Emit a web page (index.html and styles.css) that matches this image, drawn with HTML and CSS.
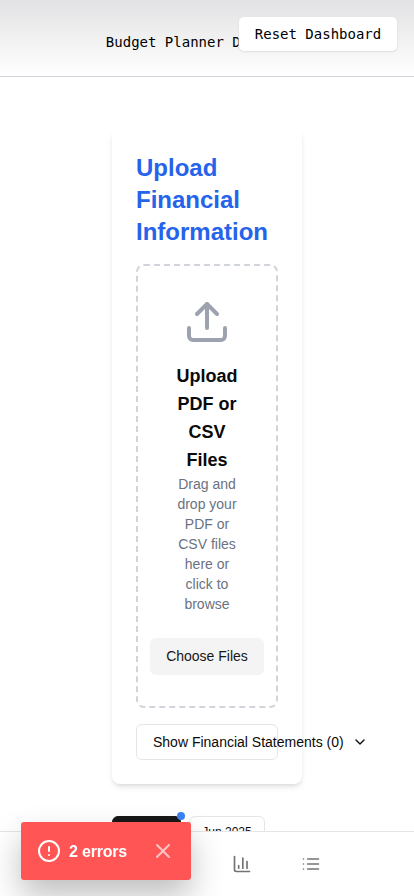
FILE: index.html
```html
<!DOCTYPE html>
<html lang="en">
<head>
<meta charset="utf-8">
<title>Budget Planner Dashboard</title>
<link rel="stylesheet" href="styles.css">
</head>
<body>
<header class="header">
  <p class="title">Budget Planner Dashboard</p>
  <button class="reset">Reset Dashboard</button>
</header>
<main class="main">
  <section class="card">
    <h2 class="heading">Upload Financial Information</h2>
    <div class="dropzone">
      <svg class="upload" viewBox="0 0 24 24"><path d="M21 15v4a2 2 0 0 1-2 2H5a2 2 0 0 1-2-2v-4"/><path d="m17 8-5-5-5 5"/><path d="M12 3v12"/></svg>
      <h3 class="drop-title">Upload PDF or CSV Files</h3>
      <p class="drop-text">Drag and drop your PDF or CSV files here or click to browse</p>
      <button class="choose">Choose Files</button>
    </div>
    <button class="statements"><span>Show Financial Statements (0)</span><svg viewBox="0 0 24 24"><path d="m6 9 6 6 6-6"/></svg></button>
  </section>
  <div class="months">
    <button class="month active">May 2025<i class="dot"></i></button>
    <button class="month">Jun 2025</button>
  </div>
</main>
<nav class="nav">
  <a><svg viewBox="0 0 24 24"><path d="m3 10 9-7 9 7v11H3z"/></svg></a>
  <a><svg viewBox="0 0 24 24"><circle cx="12" cy="12" r="9"/></svg></a>
  <a><svg viewBox="0 0 24 24"><path d="M3 3v16a2 2 0 0 0 2 2h16"/><path d="M18 17V9"/><path d="M13 17V5"/><path d="M8 17v-3"/></svg></a>
  <a><svg viewBox="0 0 24 24"><path d="M3 12h.01"/><path d="M3 18h.01"/><path d="M3 6h.01"/><path d="M8 12h13"/><path d="M8 18h13"/><path d="M8 6h13"/></svg></a>
</nav>
<div class="toast">
  <svg class="alert" viewBox="0 0 24 24"><circle cx="12" cy="12" r="10"/><path d="M12 8v4"/><path d="M12 16h.01"/></svg>
  <span class="count">2 errors</span>
  <svg class="close" viewBox="0 0 24 24"><path d="M18 6 6 18"/><path d="m6 6 12 12"/></svg>
</div>
</body>
</html>
```
FILE: styles.css
```css
* { box-sizing: border-box; }
body { margin: 0; height: 896px; overflow: hidden; background: #fff; color: #0a0a0a; font-family: "Liberation Sans", Arial, sans-serif; }
h2, h3, p { margin: 0; }
button { font: inherit; color: inherit; border: 0; padding: 0; white-space: nowrap; }
svg { display: block; flex: none; fill: none; stroke: currentColor; stroke-width: 2; stroke-linecap: round; stroke-linejoin: round; }
.header { position: relative; height: 77px; padding-top: 32px; border-bottom: 1px solid #d1d5db; background: linear-gradient(#e2e2e4, #fff); font: 14px/20px "DejaVu Sans Mono", monospace; color: #000; }
.title { text-align: center; white-space: nowrap; }
.reset { position: absolute; top: 17px; right: 17px; width: 158px; height: 34px; border-radius: 5px; background: #fff; box-shadow: 0 0 0 1px #e5e5e580, 0 1px 2px #0000001a; }
.main { width: 190px; margin: 51px auto 0; }
.card { height: 656px; padding: 24px; border-radius: 8px; background: #fff; box-shadow: 0 4px 6px -1px #0000001a, 0 2px 4px -2px #0000001a; }
.heading { margin-bottom: 16px; font-size: 24px; line-height: 32px; color: #2563eb; }
.dropzone { display: flex; flex-direction: column; align-items: center; height: 444px; padding: 32px; border: 2px dashed #d1d5db; border-radius: 8px; text-align: center; }
.upload { width: 48px; height: 48px; margin-bottom: 16px; color: #9ca3af; }
.drop-title { font-size: 18px; line-height: 28px; }
.drop-text { font-size: 14px; line-height: 20px; color: #6b7280; }
.choose { flex: none; width: 114px; height: 37px; margin-top: 24px; padding-bottom: 1px; border-radius: 6px; background: #f4f4f4; font-size: 14px; color: #171717; }
.statements { display: flex; align-items: center; gap: 8px; width: 142px; height: 36px; margin-top: 16px; padding: 0 16px; border: 1px solid #e5e5e5; border-radius: 6px; background: #fff; font-size: 14px; }
.statements svg { width: 16px; height: 16px; }
.months { display: flex; gap: 8px; margin-top: 32px; }
.month { position: relative; flex: none; width: 76px; height: 32px; padding: 0; border: 1px solid #e5e5e5; border-radius: 6px; background: #fff; font-size: 12px; }
.active { width: 69px; border-color: #171717; background: #171717; color: #fff; }
.dot { position: absolute; top: -5px; right: -5px; width: 8px; height: 8px; border-radius: 50%; background: #3b82f6; }
.nav { position: fixed; inset: auto 0 0; display: grid; grid-template-columns: repeat(4, 69px); justify-content: center; align-items: center; height: 65px; border-top: 1px solid #e5e5e5; background: #fff; color: #737373; }
.nav svg { width: 20px; height: 20px; margin: auto; }
.toast { position: fixed; left: 21px; bottom: 16px; display: flex; align-items: center; width: 170px; height: 58px; padding: 0 16px; border-radius: 3px; background: #ff5555; color: #fff; font-size: 16px; font-weight: 700; box-shadow: 0 16px 32px #00000040; }
.count { padding-top: 2px; letter-spacing: -.2px; }
.alert { width: 24px; height: 24px; margin-right: 8px; }
.close { width: 24px; height: 24px; margin-left: auto; opacity: .65; }
```
